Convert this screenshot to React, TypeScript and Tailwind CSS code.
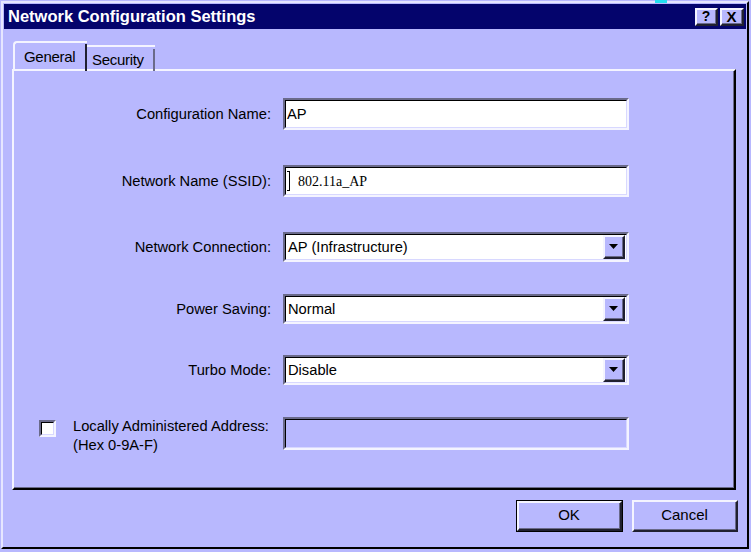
const BG = 'bg-[#b8b8fe]';

function Sunken({ children, className = '', white = true }: { children?: React.ReactNode; className?: string; white?: boolean }) {
  // win9x sunken field: outer gray/white, inner black/light
  return (
    <div className={`border-2 border-t-[#6a6a8a] border-l-[#6a6a8a] border-b-[#f4f4ff] border-r-[#f4f4ff] ${className}`}>
      <div
        className={`h-full w-full border border-t-black border-l-black border-b-[#d8d8ff] border-r-[#d8d8ff] ${white ? 'bg-white' : BG}`}
      >
        {children}
      </div>
    </div>
  );
}

function Raised({ children, className = '', isDefault = false }: { children?: React.ReactNode; className?: string; isDefault?: boolean }) {
  return (
    <div className={`${BG} ${isDefault ? 'border border-black' : ''} ${className}`}>
      <div className="h-full w-full border-2 border-t-[#f4f4ff] border-l-[#f4f4ff] border-b-[#202030] border-r-[#202030]">
        <div className="flex h-full w-full items-center justify-center border-b border-r border-b-[#6a6a8a] border-r-[#6a6a8a]">
          {children}
        </div>
      </div>
    </div>
  );
}

function Field({ label, value, serif = false, cursor = false, top }: { label: string; value: string; serif?: boolean; cursor?: boolean; top: string }) {
  return (
    <div className={`flex items-center ${top}`}>
      <div className="w-[257px] text-right text-[14.7px]">{label}</div>
      <Sunken className="ml-[12px] h-[32px] w-[346px]">
        <div className="flex h-full items-center pl-[1px]">
          {cursor && <span className="mr-[8px] h-[20px] w-[3px] border-y border-r border-black" />}
          <span className={serif ? "font-['Liberation_Serif',serif] text-[14px]" : 'text-[14.7px]'}>{value}</span>
        </div>
      </Sunken>
    </div>
  );
}

function Select({ label, value, top }: { label: string; value: string; top: string }) {
  return (
    <div className={`flex items-center ${top}`}>
      <div className="w-[257px] text-right text-[14.7px]">{label}</div>
      <Sunken className="ml-[12px] h-[30px] w-[346px]">
        <div className="flex h-full items-center justify-between pl-[2px] pr-[1px]">
          <span className="text-[14.7px]">{value}</span>
          <Raised className="h-[24px] w-[22px]">
            <svg width="9" height="5" viewBox="0 0 9 5">
              <path d="M0 0h9L4.5 5z" fill="black" />
            </svg>
          </Raised>
        </div>
      </Sunken>
    </div>
  );
}

export default function App() {
  return (
    <div className={`h-[552px] w-[751px] overflow-hidden ${BG} font-['Liberation_Sans',Arial,sans-serif] text-black`}>
      <div className="relative ml-[1px] mt-[1px] h-[548px] w-[748px] border-2 border-t-[#e6e6ff] border-l-[#e6e6ff] border-b-black border-r-black">
        <span className="absolute left-[652px] top-[-3px] h-[3px] w-[12px] bg-[#22e0f0]" />
        <div className="mx-[1px] mt-[1px] flex h-[25px] items-center justify-between bg-[#04046c] pl-[4px] pr-[2px]">
          <span className="text-[16.5px] font-bold text-white">Network Configuration Settings</span>
          <div className="flex gap-[2px]">
            <Raised className="h-[18px] w-[23px]">
              <span className="text-[14px] font-bold leading-none">?</span>
            </Raised>
            <Raised className="h-[18px] w-[24px]">
              <span className="text-[15px] font-bold leading-none">X</span>
            </Raised>
          </div>
        </div>

        <div className="ml-[10px] mt-[12px] flex items-end">
          <div className="relative z-10 -mb-[2px] flex h-[30px] w-[74px] items-start rounded-tl-[4px] border-l-2 border-t-2 border-l-[#f4f4ff] border-t-[#f4f4ff] pl-[9px] pt-[3px]">
            <span className="text-[15px] tracking-[-0.3px]">General</span>
            <span className="absolute right-0 top-[1px] h-[27px] w-[2px] bg-[#202030]" />
          </div>
          <div className="flex h-[24px] w-[68px] items-start border-t-2 border-t-[#f4f4ff] pl-[5px] pt-[2px]">
            <span className="text-[15px] tracking-[-0.3px]">Security</span>
            <span className="ml-auto h-[22px] w-[2px] bg-[#6a6a8a]" />
          </div>
        </div>

        <div className="ml-[9px] h-[421px] w-[724px] border-2 border-t-[#f4f4ff] border-l-[#f4f4ff] border-b-black border-r-black">
          <div className="h-full w-full border-b border-r border-b-[#6a6a8a] border-r-[#6a6a8a]">
            <Field label="Configuration Name:" value="AP" top="pt-[27px]" />
            <Field label="Network Name (SSID):" value="802.11a_AP" serif cursor top="mt-[35px]" />
            <Select label="Network Connection:" value="AP (Infrastructure)" top="mt-[35px]" />
            <Select label="Power Saving:" value="Normal" top="mt-[32px]" />
            <Select label="Turbo Mode:" value="Disable" top="mt-[31px]" />
            <div className="mt-[32px] flex items-start">
              <div className="flex w-[257px] items-start pl-[25px]">
                <Sunken className="mt-[3px] h-[17px] w-[17px]" />
                <div className="ml-[17px] text-[14.7px] leading-[19px]">
                  <div>Locally Administered Address:</div>
                  <div>(Hex 0-9A-F)</div>
                </div>
              </div>
              <Sunken white={false} className="ml-[12px] h-[33px] w-[346px]" />
            </div>
          </div>
        </div>

        <div className="mr-[9px] mt-[10px] flex justify-end gap-[9px]">
          <Raised isDefault className="h-[32px] w-[107px]">
            <span className="text-[15px]">OK</span>
          </Raised>
          <Raised className="h-[32px] w-[106px]">
            <span className="text-[15px]">Cancel</span>
          </Raised>
        </div>
      </div>
    </div>
  );
}
